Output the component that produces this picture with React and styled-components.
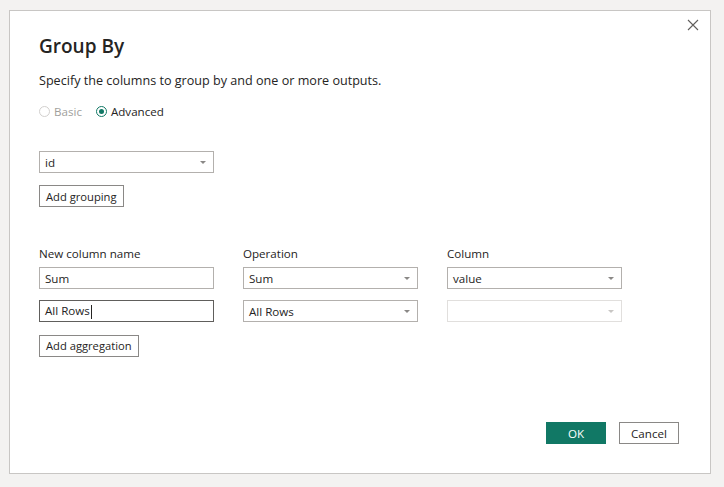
import React from 'react'
import styled, { createGlobalStyle } from 'styled-components'

const GlobalStyle = createGlobalStyle`
  body {
    margin: 0;
    background: #f3f2f1;
    font-family: 'Open Sans', 'Noto Sans', sans-serif;
    color: #252423;
  }
`

const Page = styled.div`
  padding: 10px 0 0 9px;
`

const Dialog = styled.div`
  position: relative;
  box-sizing: border-box;
  width: 702px;
  height: 464px;
  background: #fff;
  border: 1px solid #c8c6c4;
  padding: 22px 29px 0;
  display: flex;
  flex-direction: column;
`

const CloseButton = styled.button`
  position: absolute;
  top: 2px;
  right: 5px;
  width: 24px;
  height: 24px;
  border: none;
  background: none;
  padding: 0;
  display: flex;
  align-items: center;
  justify-content: center;
`

const Title = styled.h1`
  margin: 0;
  font-size: 19px;
  font-weight: 600;
  line-height: 26px;
  color: #252423;
`

const Subtitle = styled.p`
  margin: 13px 0 0;
  font-size: 12.6px;
  line-height: 18px;
`

const RadioRow = styled.div`
  display: flex;
  gap: 14px;
  margin-top: 14px;
  font-size: 11.6px;
`

const RadioLabel = styled.label`
  display: flex;
  align-items: center;
  gap: 4px;
  color: ${(p) => (p.disabled ? '#a19f9d' : '#252423')};
`

const RadioDot = styled.span`
  box-sizing: border-box;
  width: 11px;
  height: 11px;
  border-radius: 50%;
  border: 1px solid ${(p) => (p.checked ? '#117865' : '#d2d0ce')};
  display: flex;
  align-items: center;
  justify-content: center;
  &::after {
    content: '';
    width: 5px;
    height: 5px;
    border-radius: 50%;
    background: ${(p) => (p.checked ? '#117865' : 'transparent')};
  }
`

const Field = styled.div`
  box-sizing: border-box;
  width: 175px;
  height: 22px;
  border: 1px solid ${(p) => (p.focused ? '#605e5c' : p.disabled ? '#e1dfdd' : '#b3b0ad')};
  display: flex;
  align-items: center;
  padding: 0 7px 0 5px;
  font-size: 11.6px;
  color: #252423;
  background: #fff;
`

const Caret = styled.span`
  margin-left: auto;
  width: 0;
  height: 0;
  border-left: 3px solid transparent;
  border-right: 3px solid transparent;
  border-top: 3px solid ${(p) => (p.disabled ? '#c8c6c4' : '#8a8886')};
`

const Cursor = styled.span`
  display: inline-block;
  width: 1px;
  height: 14px;
  background: #252423;
  vertical-align: middle;
  margin-left: 1px;
`

const GroupSection = styled.div`
  margin-top: 32px;
  display: flex;
  flex-direction: column;
  align-items: flex-start;
  gap: 12px;
`

const Button = styled.button`
  box-sizing: border-box;
  height: 22px;
  padding: 0 6px;
  font-family: inherit;
  font-size: 11.2px;
  color: #252423;
  background: #fff;
  border: 1px solid #8a8886;
  cursor: pointer;
`

const AggGrid = styled.div`
  margin-top: 39px;
  display: grid;
  grid-template-columns: 204px 204px 175px;
  row-gap: 11px;
  align-items: end;
`

const ColLabel = styled.div`
  font-size: 11.6px;
  line-height: 16px;
  margin-bottom: -6px;
`

const AddAgg = styled.div`
  margin-top: 11px;
`

const Footer = styled.div`
  margin-top: auto;
  margin-bottom: 29px;
  display: flex;
  justify-content: flex-end;
  gap: 13px;
  padding-right: 2px;
`

const FooterButton = styled(Button)`
  width: 60px;
  padding: 0;
  font-size: 11.6px;
  background: ${(p) => (p.primary ? '#117865' : '#fff')};
  color: ${(p) => (p.primary ? '#fff' : '#252423')};
  border-color: ${(p) => (p.primary ? '#117865' : '#8a8886')};
`

const rows = [
  { name: 'Sum', op: 'Sum', col: 'value' },
  { name: 'All Rows', op: 'All Rows', col: '', focused: true },
]

export default function App() {
  return (
    <>
      <GlobalStyle />
      <Page>
        <Dialog>
          <CloseButton aria-label='Close'>
            <svg width='12' height='12' viewBox='0 0 12 12'>
              <path d='M1 1L11 11M11 1L1 11' stroke='#605e5c' strokeWidth='1.1' />
            </svg>
          </CloseButton>
          <Title>Group By</Title>
          <Subtitle>Specify the columns to group by and one or more outputs.</Subtitle>
          <RadioRow>
            <RadioLabel disabled>
              <RadioDot />
              Basic
            </RadioLabel>
            <RadioLabel>
              <RadioDot checked />
              Advanced
            </RadioLabel>
          </RadioRow>

          <GroupSection>
            <Field>
              id
              <Caret />
            </Field>
            <Button>Add grouping</Button>
          </GroupSection>

          <AggGrid>
            <ColLabel>New column name</ColLabel>
            <ColLabel>Operation</ColLabel>
            <ColLabel>Column</ColLabel>
            {rows.map((r) => (
              <React.Fragment key={r.name}>
                <Field focused={r.focused}>
                  <span>
                    {r.name}
                    {r.focused && <Cursor />}
                  </span>
                </Field>
                <Field>
                  {r.op}
                  <Caret />
                </Field>
                <Field disabled={!r.col}>
                  {r.col}
                  <Caret disabled={!r.col} />
                </Field>
              </React.Fragment>
            ))}
          </AggGrid>

          <AddAgg>
            <Button>Add aggregation</Button>
          </AddAgg>

          <Footer>
            <FooterButton primary>OK</FooterButton>
            <FooterButton>Cancel</FooterButton>
          </Footer>
        </Dialog>
      </Page>
    </>
  )
}
